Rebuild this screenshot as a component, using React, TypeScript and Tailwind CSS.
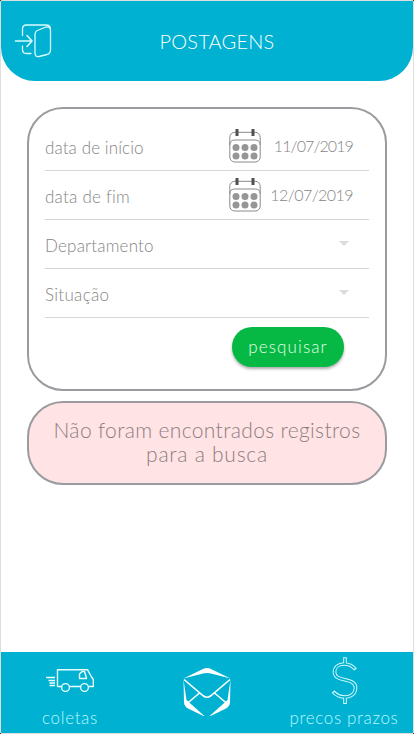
import type { ReactNode } from "react";

function ExitIcon() {
  return (
    <svg width="38" height="36" viewBox="14 22 38 36" fill="none" stroke="#d9fbff" strokeWidth="1.3" strokeLinecap="round" strokeLinejoin="round">
      <path d="M22.500 35.500V29q0-4 4-4H46q4.500 0 4.500 4.500M22.500 46v3.500q0 4 4 4H31" />
      <path d="M38.500 30 46 27q4.500-1 4.500 3.500V50q0 3.500-3.500 4.500L39 56.500q-4 .7-4-3.500V35q0-4 3.500-5Z" />
      <path d="M15.500 41H31.500M27 35.500 32 41 27 46.500" strokeWidth="1.600" />
    </svg>
  );
}

function CalendarIcon() {
  return (
    <svg width="32" height="36" viewBox="0 0 32 36" className="mb-[2px] shrink-0">
      <rect x=".8" y="5.300" width="30.400" height="29.700" rx="5" fill="none" stroke="#8a8a8a" />
      <path d="M.8 18q0-5 5-5h20.400q5 0 5 5" fill="none" stroke="#8a8a8a" />
      <path d="M6.500 2h3v7h-3ZM22.500 2h3v7h-3Z" fill="#505050" />
      {[7, 16, 25].map((x) => (
        <g key={x} fill="#969696">
          <circle cx={x} cy="20.500" r="3.500" />
          <circle cx={x} cy="29" r="3.500" />
        </g>
      ))}
    </svg>
  );
}

function Row({ label, labelClass, children }: { label: string; labelClass: string; children: ReactNode }) {
  return (
    <div className="flex h-[49px] items-center justify-between border-b border-[#d6d6d6] pr-4">
      <span className={`pt-[3px] text-[17px] ${labelClass}`}>{label}</span>
      {children}
    </div>
  );
}

function Caret() {
  return (
    <svg width="10" height="5" viewBox="0 0 10 5" className="mr-1 mb-[2px]">
      <path d="M0 0h10L5 5Z" fill="#dcdcdc" />
    </svg>
  );
}

function TruckIcon() {
  return (
    <svg width="50" height="26" viewBox="45 666 50 26" fill="none" stroke="#eaffff" strokeWidth="1.400" strokeLinejoin="round">
      <path d="M61.500 686.500H57.500V669.700H87.500L91.500 677 93.300 679.500V686.500H88.500M80.500 686.500H69.500" />
      <path d="M79.500 678.500V674l2.500-2.500h2.500l2 6.500v.5Z" />
      <circle cx="65.500" cy="687.500" r="3.900" />
      <circle cx="84.500" cy="687.500" r="3.900" />
      <path d="M46 677.500h9M48.500 680.500H55M49.500 683H55M49.500 685.500H55" />
    </svg>
  );
}

function EnvelopeIcon() {
  return (
    <svg width="50" height="50" viewBox="182 666 50 50">
      <path d="M183.500 678.500 203 669q4-2 8 0l19.500 9.500L211 673.500q-4-1-8 0Z" fill="#fff" />
      <path d="M183.500 679.500 186.500 700 205.500 717 188 708.500q-3.500-2-4-6ZM230.500 679.500 227.500 700 208.500 717 226 708.500q3.500-2 4-6Z" fill="#fff" />
      <path d="M184 679.500 203.500 696q3.500 2.500 7 0L230 679.500M186.500 704 199.500 693M227.500 704 214.500 693" fill="none" stroke="#fff" strokeWidth="1.600" />
    </svg>
  );
}

function DollarIcon() {
  return (
    <svg width="30" height="50" viewBox="329 655 30 50" fill="none" strokeLinejoin="round">
      <g stroke="#d5faff" strokeWidth="3.600">
        <path d="M345 657.200V664M345 697V704" />
        <path d="M355.500 669.500C352 665 348 664 344 664C338 664 334.500 667.500 334.500 672C334.500 683 355.500 676.500 355.500 688C355.500 693.500 351 697 345 697C340 697 336.500 695.500 333 691.500" />
      </g>
      <g stroke="#00b1d2" strokeWidth="1.700">
        <path d="M345 658.200V664M345 697V703" />
        <path d="M354.700 668.500C351.500 665 348 664 344 664C338 664 334.500 667.500 334.500 672C334.500 683 355.500 676.500 355.500 688C355.500 693.500 351 697 345 697C340 697 336.500 695.500 333.800 692.500" />
      </g>
    </svg>
  );
}

export default function App() {
  return (
    <div className="h-[734px] w-[414px] bg-[#222]">
      <div className="flex h-full w-full flex-col overflow-hidden rounded-[2px] border border-[#dedede] bg-white font-['Lato','Open_Sans',sans-serif] text-[16px] leading-6 font-light whitespace-nowrap text-[#858585]">
        <header className="grid h-20 shrink-0 grid-cols-[70px_1fr_70px] items-center rounded-b-[34px] bg-[#00b1d2] text-white">
          <div className="pb-[2px] pl-[13px]"><ExitIcon /></div>
          <h1 className="pl-5 text-center text-[20px] tracking-[0.2px]">POSTAGENS</h1>
        </header>
        <main className="flex flex-1 flex-col gap-[10px] px-[26px] pt-[26px]">
          <section className="h-[284px] rounded-[36px] border-2 border-[#999b9e] px-4 pt-[13px]">
            <Row label="data de início" labelClass="tracking-[0.1px]">
              <div className="flex items-center"><CalendarIcon /><span className="w-[92px] text-right tracking-[-0.900px]">11/07/2019</span></div>
            </Row>
            <Row label="data de fim" labelClass="tracking-[0.25px]">
              <div className="flex items-center"><CalendarIcon /><span className="w-[92px] text-right tracking-[-0.550px]">12/07/2019</span></div>
            </Row>
            <Row label="Departamento" labelClass="tracking-[0.2px]"><Caret /></Row>
            <Row label="Situação" labelClass="tracking-[0.3px]"><Caret /></Row>
            <div className="flex justify-end pt-[9px] pr-[25px]">
              <button className="h-10 w-28 rounded-full bg-[#05b944] text-[17px] tracking-[1.100px] text-[#e5ffe9] shadow-[0_2px_3px_#0005]">pesquisar</button>
            </div>
          </section>
          <section className="flex h-[84px] flex-col justify-center rounded-[36px] border-2 border-[#999b9e] bg-[#ffe3e5] pb-[2px] text-center text-[21px] text-[#8d7e80]">
            <p className="tracking-[0.35px]">Não foram encontrados registros</p>
            <p className="tracking-[0.75px]">para a busca</p>
          </section>
        </main>
        <footer className="flex h-[81px] shrink-0 justify-between bg-[#00b1d2] text-[#baf7ff]">
          <div className="flex w-[138px] flex-col items-center pt-[14px]">
            <TruckIcon />
            <span className="mt-[14px] text-[17px] tracking-[0.65px]">coletas</span>
          </div>
          <div className="flex w-[136px] justify-center pt-[14px]"><EnvelopeIcon /></div>
          <div className="flex w-[138px] flex-col items-center pt-[3px]">
            <DollarIcon />
            <span className="mt-px text-[17px] tracking-[0.65px]">precos prazos</span>
          </div>
        </footer>
      </div>
    </div>
  );
}
